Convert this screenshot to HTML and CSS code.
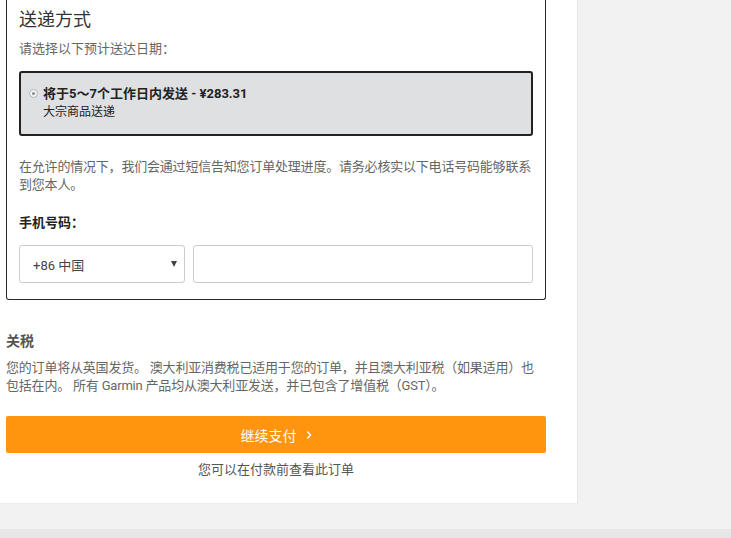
FILE: index.html
```html
<!DOCTYPE html>
<html lang="zh-CN">
<head>
<meta charset="utf-8">
<title>送递方式</title>
<link rel="stylesheet" href="styles.css">
</head>
<body>
<div class="panel">
  <section class="delivery">
    <h2 class="title">送递方式</h2>
    <p class="hint">请选择以下预计送达日期：</p>
    <div class="option">
      <span class="radio"><span class="dot"></span></span>
      <div class="option-text">
        <div class="option-main">将于5～7个工作日内发送 - ¥283.31</div>
        <div class="option-sub">大宗商品送递</div>
      </div>
    </div>
    <p class="notice">在允许的情况下，我们会通过短信告知您订单处理进度。请务必核实以下电话号码能够联系到您本人。</p>
    <div class="label">手机号码：</div>
    <div class="phone-row">
      <div class="select"><span>+86 中国</span><span class="caret"></span></div>
      <div class="input"></div>
    </div>
  </section>
  <h3 class="tax-title">关税</h3>
  <p class="tax-text">您的订单将从英国发货。 澳大利亚消费税已适用于您的订单，并且澳大利亚税（如果适用）也包括在内。 所有 Garmin 产品均从澳大利亚发送，并已包含了增值税（GST）。</p>
  <button class="pay">继续支付<svg class="chev" width="6" height="10" viewBox="0 0 6 10"><polyline points="1.2,1.5 4.6,5 1.2,8.5" fill="none" stroke="#fff" stroke-width="1.4"/></svg></button>
  <p class="review">您可以在付款前查看此订单</p>
</div>
<div class="gap"></div>
<div class="strip"></div>
</body>
</html>
```
FILE: styles.css
```css
html, body {
  margin: 0;
  padding: 0;
}
body {
  background: #f2f2f2;
  font-family: "Roboto", "Noto Sans CJK SC", sans-serif;
  font-size: 13px;
  color: #666;
}
.panel {
  width: 578px;
  box-sizing: border-box;
  border-right: 1px solid #e6e6e6;
  border-bottom: 1px solid #ececec;
  background: #fff;
  padding: 0 31px 24px 6px;
}
.delivery {
  border: 1px solid #2a2a2a;
  border-top: 0;
  border-radius: 0 0 3px 3px;
  padding: 8px 12px 16px;
}
.title {
  margin: 0;
  font-size: 18px;
  line-height: 24px;
  font-weight: normal;
  color: #333;
}
.hint {
  margin: 8px 0 0;
  line-height: 18px;
  color: #666;
}
.option {
  margin-top: 13px;
  border: 2px solid #222;
  border-radius: 3px;
  background: #dfe0e2;
  padding: 12px 8px 13px 8px;
  display: flex;
  gap: 5px;
  align-items: flex-start;
}
.radio {
  width: 9px;
  height: 9px;
  margin-top: 4px;
  border: 1px solid #b5b5b5;
  border-radius: 50%;
  background: #f4f4f4;
  box-sizing: border-box;
  display: flex;
  align-items: center;
  justify-content: center;
  flex: none;
}
.dot {
  width: 3px;
  height: 3px;
  border-radius: 50%;
  background: #8a8a8a;
}
.option-text {
  line-height: 18px;
  color: #222;
}
.option-main {
  font-weight: bold;
}
.option-sub {
  font-size: 12px;
}
.notice {
  margin: 22px 0 0;
  line-height: 18px;
  color: #666;
  letter-spacing: -0.2px;
}
.label {
  margin-top: 20px;
  line-height: 18px;
  font-weight: bold;
  color: #222;
}
.phone-row {
  margin-top: 13px;
  display: flex;
  gap: 8px;
}
.select {
  width: 166px;
  height: 38px;
  box-sizing: border-box;
  border: 1px solid #ccc;
  border-radius: 3px;
  padding: 0 7px 0 13px;
  display: flex;
  align-items: center;
  justify-content: space-between;
  color: #444;
  flex: none;
}
.caret {
  width: 0;
  height: 0;
  border-left: 3px solid transparent;
  border-right: 3px solid transparent;
  border-top: 6px solid #444;
}
.input {
  flex: 1;
  height: 38px;
  box-sizing: border-box;
  border: 1px solid #ccc;
  border-radius: 3px;
}
.tax-title {
  margin: 31px 0 0;
  font-size: 14px;
  line-height: 20px;
  font-weight: bold;
  color: #555;
}
.tax-text {
  margin: 8px 0 0;
  line-height: 18px;
  color: #666;
  width: 540px;
  letter-spacing: -0.2px;
}
.pay {
  display: flex;
  align-items: center;
  justify-content: center;
  gap: 9px;
  margin-top: 21px;
  width: 540px;
  height: 37px;
  border: 0;
  border-radius: 2px;
  background: #ff940f;
  color: #fff;
  font-family: inherit;
  font-size: 14px;
  padding: 0;
}
.chev {
  display: block;
}
.review {
  margin: 8px 0 0;
  width: 540px;
  text-align: center;
  line-height: 18px;
  color: #555;
}
.gap {
  height: 25px;
}
.strip {
  height: 20px;
  background: #e6e6e6;
}
```
